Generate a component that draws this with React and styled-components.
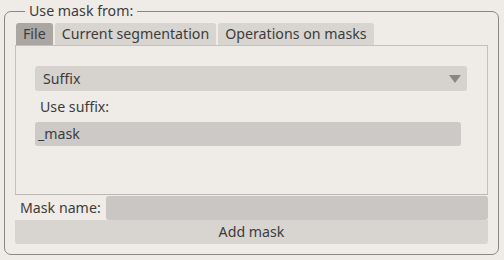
import React from "react";
import styled, { createGlobalStyle } from "styled-components";

const Global = createGlobalStyle`
  html, body {
    margin: 0;
    background: #efebe7;
  }
  body {
    font-family: "Noto Sans", "Open Sans", sans-serif;
    font-size: 14.2px;
    color: #3c3c3c;
  }
`;

const Frame = styled.fieldset`
  margin: 2px 5px 0 4px;
  height: 253px;
  box-sizing: border-box;
  border: 1px solid #8b8783;
  border-radius: 7px;
  padding: 3px 10px 9px 10px;
  display: flex;
  flex-direction: column;
  min-width: 0;
`;

const Legend = styled.legend`
  margin-left: 10px;
  padding: 0 4px 0 4px;
  line-height: 18px;
  height: 18px;
`;

const TabBar = styled.div`
  display: flex;
  gap: 2px;
  padding-left: 1px;
  height: 22px;
`;

const Tab = styled.div`
  padding: 0 7px;
  height: 22px;
  line-height: 22px;
  border-radius: 3px 3px 0 0;
  background: ${(p) => (p.$active ? "#aaa6a2" : "#d8d4d0")};
  white-space: nowrap;
`;

const Pane = styled.div`
  height: 150px;
  box-sizing: border-box;
  border: 1px solid #c4c0bc;
  border-bottom-color: #bcb8b4;
  padding: 20px 20px 0 19px;
  display: flex;
  flex-direction: column;
`;

const Combo = styled.div`
  height: 25px;
  border-radius: 3px;
  background: #d6d2ce;
  display: flex;
  align-items: center;
  justify-content: space-between;
  padding: 0 6px 0 8px;
`;

const Arrow = styled.span`
  width: 0;
  height: 0;
  border-left: 6px solid transparent;
  border-right: 6px solid transparent;
  border-top: 8px solid #8a8682;
`;

const Label = styled.div`
  padding: ${(p) => p.$pad || "0"};
  line-height: 31px;
  white-space: nowrap;
`;

const Input = styled.div`
  height: 24px;
  line-height: 24px;
  border-radius: 3px;
  background: ${(p) => p.$bg || "#cbc7c4"};
  padding: 0 3px;
  margin-right: ${(p) => p.$mr || "0"};
  flex: ${(p) => p.$flex || "none"};
`;

const Row = styled.div`
  display: flex;
  align-items: center;
  height: 25px;
`;

const Button = styled.div`
  height: 24px;
  line-height: 24px;
  text-align: center;
  background: #d8d4d0;
  border-radius: 0 0 3px 3px;
`;

export default function App() {
  return (
    <>
      <Global />
      <Frame>
        <Legend>Use mask from:</Legend>
        <TabBar>
          <Tab $active>File</Tab>
          <Tab>Current segmentation</Tab>
          <Tab>Operations on masks</Tab>
        </TabBar>
        <Pane>
          <Combo>
            <span>Suffix</span>
            <Arrow />
          </Combo>
          <Label $pad="0 0 0 5px">Use suffix:</Label>
          <Input $bg="#cdc9c6" $mr="6px">_mask</Input>
        </Pane>
        <Row>
          <Label $pad="0 5px 0 5px">Mask name:</Label>
          <Input $flex="1" $bg="#cac6c3" />
        </Row>
        <Button>Add mask</Button>
      </Frame>
    </>
  );
}
